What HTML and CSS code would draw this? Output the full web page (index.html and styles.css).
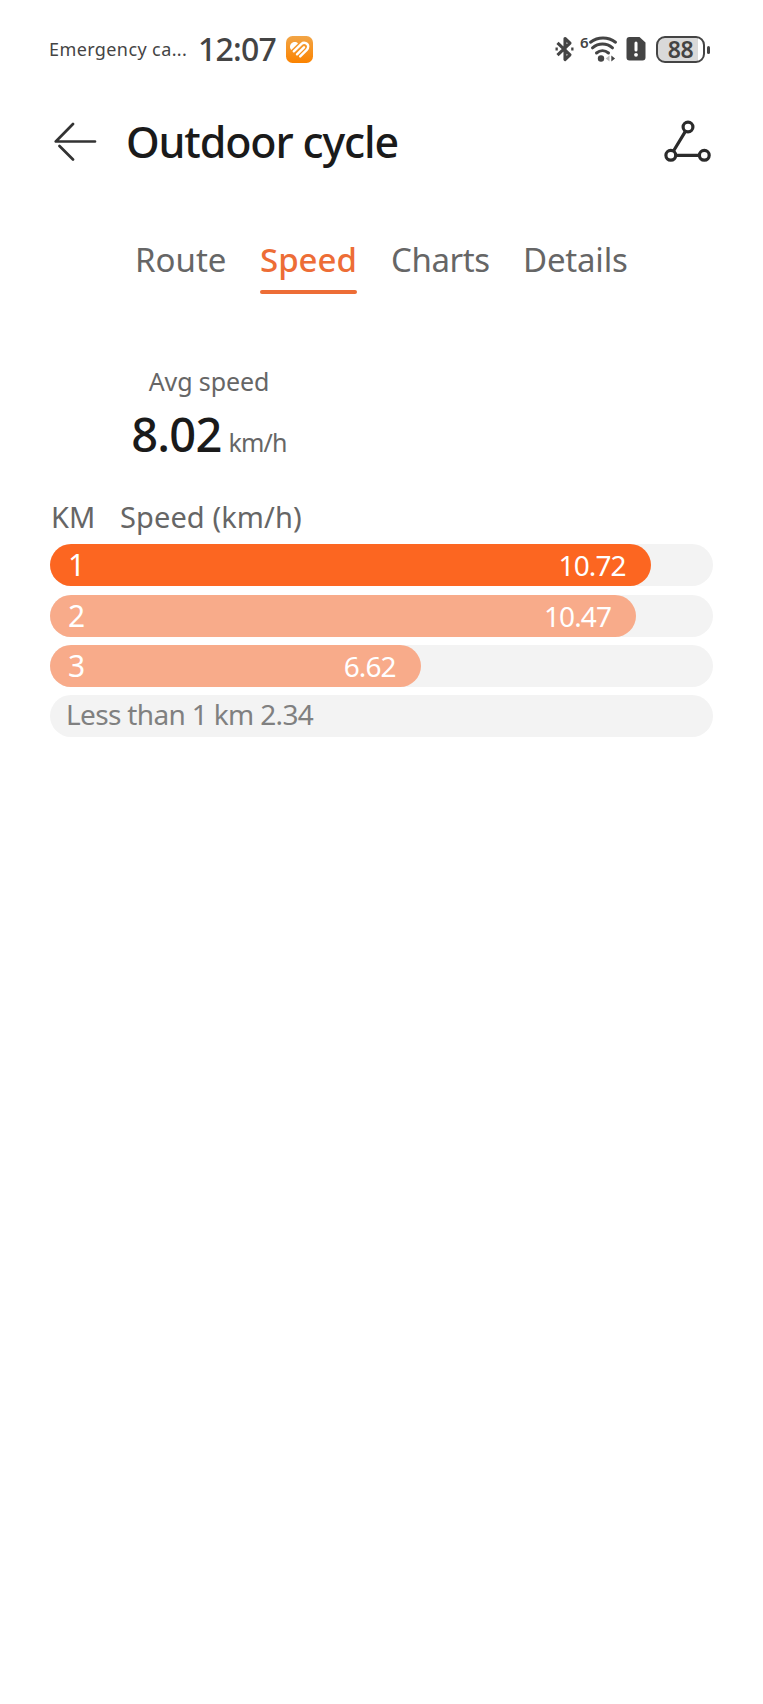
FILE: index.html
```
<!DOCTYPE html>
<html lang="en">
<head>
    <meta charset="UTF-8">
    <meta name="viewport" content="width=device-width, initial-scale=1.0">
    <title>Outdoor cycle</title>
    <link rel="stylesheet" href="styles.css">
</head>
<body>
    <div class="status-bar">
        <span class="carrier">Emergency ca...</span>
        <span class="clock">12:07</span>
        <svg class="health-icon" width="27" height="27" viewBox="0 0 27 27">
            <defs>
                <linearGradient id="healthBg" x1="0" y1="0" x2="0" y2="1">
                    <stop offset="0" stop-color="#f2a546"/>
                    <stop offset="1" stop-color="#fb8300"/>
                </linearGradient>
            </defs>
            <rect width="27" height="27" rx="6.5" fill="url(#healthBg)"/>
            <path d="M12 7.500C9.500 4.500 4 6.500 4 10.700c0 1.300.5 2.300 1.300 3.200z" fill="#fff"/>
            <path d="M7.800 15.300l7.700-7.500c2.500-2.300 6.700-.6 6.700 2.800 0 1.300-.5 2.300-1.400 3.200l-6.600 6.600M11 18.300l7-7" fill="none" stroke="#fff" stroke-width="2.400" stroke-linecap="round"/>
        </svg>
        <div class="status-icons">
            <svg width="19" height="26" viewBox="0 0 19 26" fill="none" stroke="#444" stroke-width="3.100" stroke-linejoin="round">
                <path d="M2.500 6.800l12.500 12-5 4.700V2.500l5 4.700-12.500 12"/>
                <path d="M.5 13h2.300M16.200 13h2.300"/>
            </svg>
            <svg class="wifi-icon" width="36" height="27" viewBox="0 0 36 27">
                <text class="wifi-gen" x="-1" y="12">6</text>
                <g fill="none" stroke="#444" stroke-width="3" stroke-linecap="round">
                    <path d="M9.500 6.200c7.500-5.500 17.500-5.500 25 0"/>
                    <path d="M11.500 11.800c6-5 14-5 20 0"/>
                    <path d="M15.500 17c3.600-3 8.400-3 12 0"/>
                </g>
                <circle cx="20" cy="22.500" r="3.200" fill="#444"/>
                <path d="M28.500 19.500v6l-3.800-3z" fill="#bbb"/>
                <path d="M30.300 19.500v6l3.800-3z" fill="#444"/>
            </svg>
            <svg class="sim-icon" width="20" height="26" viewBox="0 0 20 26">
                <path d="M3.500 1H13.500L19.500 6.500V21.500a3 3 0 0 1-3 3H3.500a3 3 0 0 1-3-3V4a3 3 0 0 1 3-3z" fill="#444"/>
                <path d="M10 7v7" stroke="#fff" stroke-width="3" stroke-linecap="round"/>
                <circle cx="10" cy="18.800" r="1.900" fill="#fff"/>
            </svg>
            <div class="battery"><span>88</span></div>
        </div>
    </div>

    <header class="header">
        <svg width="43" height="40" viewBox="0 0 43 40" fill="none" stroke="#333" stroke-width="2.700" stroke-linecap="round" stroke-linejoin="round">
            <path d="M19 2L1.800 19.500H41M5.500 24L19 37.500"/>
        </svg>
        <h1>Outdoor cycle</h1>
        <svg class="track-icon" width="48" height="44" viewBox="0 0 48 44" fill="none" stroke="#2b2b2b" stroke-width="3.200">
            <circle cx="24" cy="7" r="4.900"/>
            <circle cx="6.800" cy="35.300" r="4.900"/>
            <circle cx="40.300" cy="35.300" r="4.900"/>
            <path d="M21.400 11.300L9.500 31M11.700 35.300h23.700"/>
        </svg>
    </header>

    <nav class="tabs">
        <a class="tab route">Route</a>
        <a class="tab active">Speed</a>
        <a class="tab charts">Charts</a>
        <a class="tab details">Details</a>
    </nav>

    <section class="summary">
        <div class="summary-label">Avg speed</div>
        <div class="summary-value"><span class="value">8.02</span><span class="unit">km/h</span></div>
    </section>

    <section class="splits">
        <div class="splits-head">
            <span class="km">KM</span>
            <span>Speed (km/h)</span>
        </div>
        <div class="split">
            <div class="bar fastest" style="width: 90.6%"><span class="num">1</span><span class="speed">10.72</span></div>
        </div>
        <div class="split">
            <div class="bar" style="width: 88.4%"><span class="num">2</span><span class="speed">10.47</span></div>
        </div>
        <div class="split">
            <div class="bar" style="width: 55.9%"><span class="num">3</span><span class="speed">6.62</span></div>
        </div>
        <div class="split rest">Less than 1 km 2.34</div>
    </section>
</body>
</html>
```
FILE: styles.css
```
* {
    box-sizing: border-box;
}

body {
    margin: 0;
    font-family: "Noto Sans", sans-serif;
    background-color: #fff;
    color: #666;
}

.status-bar {
    display: flex;
    align-items: center;
    height: 98px;
    padding: 0 51px 0 49px;
    color: #444;
    white-space: nowrap;
}

.carrier {
    width: 149px;
    font-size: 18px;
    letter-spacing: 0.4px;
    line-height: 28px;
}

.clock {
    width: 88px;
    font-size: 32px;
    font-weight: 500;
    letter-spacing: -0.8px;
    line-height: 42px;
}

.status-icons {
    display: flex;
    align-items: center;
    margin-left: auto;
}

.wifi-icon {
    margin-left: 7px;
    overflow: visible;
}

.wifi-gen {
    font-size: 15px;
    font-weight: 600;
    fill: #444;
}

.sim-icon {
    margin: 0 10px 0 9px;
}

.battery {
    position: relative;
    width: 49px;
    height: 27px;
    margin-right: 7px;
    border: 2px solid #444;
    border-radius: 9px;
    background: linear-gradient(to right, #d9d9d9 88%, #fff 88%);
    font-size: 23px;
    font-weight: 600;
    letter-spacing: -0.5px;
    line-height: 22px;
    text-align: center;
}

.battery::after {
    content: "";
    position: absolute;
    top: 8px;
    right: -7px;
    width: 3px;
    height: 8px;
    border-radius: 2px;
    background-color: #444;
}

.header {
    display: flex;
    align-items: center;
    height: 87px;
    padding: 0 51px 0 54px;
}

h1 {
    margin: 1px 0 0 29px;
    font-size: 43px;
    font-weight: 500;
    letter-spacing: -1.15px;
    line-height: 60px;
    color: #1a1a1a;
    white-space: nowrap;
}

.track-icon {
    margin-left: auto;
}

.tabs {
    display: flex;
    gap: 34px;
    height: 110px;
    padding: 45px 0 0 135px;
}

.tab {
    height: 64px;
    font-size: 33px;
    letter-spacing: -0.2px;
    line-height: 59px;
    white-space: nowrap;
}

.route {
    width: 91px;
    letter-spacing: 0;
}

.tab.active {
    position: relative;
    width: 97px;
    font-weight: 500;
    letter-spacing: 0;
    color: #ed6d36;
}

.tab.active::after {
    content: "";
    position: absolute;
    left: 0;
    bottom: 0;
    width: 97px;
    height: 4px;
    border-radius: 2px;
    background-color: #ed6d36;
}

.charts {
    width: 98px;
    letter-spacing: -0.4px;
}

.summary {
    width: 318px;
    padding: 68px 0 0 100px;
    height: 195px;
    text-align: center;
    white-space: nowrap;
}

.summary-label {
    font-size: 25px;
    letter-spacing: -0.1px;
    line-height: 36px;
}

.summary-value {
    line-height: 70px;
}

.value {
    font-size: 47px;
    font-weight: 500;
    letter-spacing: -0.8px;
    color: #1a1a1a;
}

.unit {
    margin-left: 7px;
    font-size: 25px;
    letter-spacing: -0.8px;
}

.splits {
    display: flex;
    flex-direction: column;
    gap: 8.3px;
    padding: 0 50px;
}

.splits-head {
    display: flex;
    height: 46px;
    padding-left: 1px;
    font-size: 29px;
    letter-spacing: 0.1px;
    line-height: 54px;
}

.km {
    width: 69px;
}

.split {
    height: 42px;
    border-radius: 21px;
    background-color: #f3f3f3;
    line-height: 42px;
}

.bar {
    display: flex;
    justify-content: space-between;
    height: 42px;
    padding: 0 25px 0 18px;
    border-radius: 21px;
    background-color: #f8ab8a;
    color: #fff;
}

.bar.fastest {
    background-color: #fc6621;
}

.num {
    font-size: 30px;
}

.speed {
    font-size: 28px;
    letter-spacing: -0.9px;
    line-height: 42px;
}

.rest {
    padding-left: 16px;
    font-size: 28px;
    letter-spacing: -0.65px;
    line-height: 39px;
    color: #808080;
}
```
